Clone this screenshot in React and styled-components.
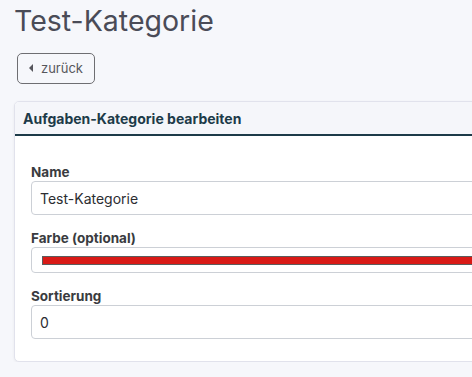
import React from 'react';
import styled, { createGlobalStyle } from 'styled-components';

const Global = createGlobalStyle`
    html, body {
        margin: 0;
        background: #f6f7fb;
        overflow: hidden;
    }
    body {
        font-family: Inter, "Noto Sans", sans-serif;
    }
`;

const Page = styled.div`
    width: 600px;
    padding: 4px 0 0 14px;
`;

const Title = styled.h1`
    margin: 0;
    font-size: 28.5px;
    font-weight: 400;
    line-height: 34px;
    color: #4a4b57;
`;

const BackButton = styled.button`
    margin: 15px 0 0 3px;
    height: 31px;
    width: 78px;
    display: flex;
    align-items: center;
    justify-content: center;
    gap: 8px;
    background: transparent;
    border: 1px solid #6e6e72;
    border-radius: 5px;
    font-family: inherit;
    font-size: 13px;
    color: #56565c;
    padding: 0 0 1px;
`;

const Arrow = styled.span`
    width: 0;
    height: 0;
    border-top: 4px solid transparent;
    border-bottom: 4px solid transparent;
    border-right: 4px solid #56565c;
`;

const Card = styled.div`
    margin-top: 17px;
    background: #fff;
    border: 1px solid #e1e2ec;
    border-radius: 5px;
    box-shadow: 0 1px 3px rgba(0, 0, 0, 0.06);
    overflow: hidden;
`;

const CardHeader = styled.div`
    height: 32px;
    background: #f5f6fa;
    border-bottom: 2px solid #1d3b49;
    display: flex;
    align-items: center;
    padding-left: 8px;
    font-size: 14px;
    font-weight: 700;
    color: #1d3b49;
`;

const CardBody = styled.div`
    padding: 27px 16px 22px;
    display: flex;
    flex-direction: column;
`;

const Label = styled.label`
    font-size: 13.5px;
    font-weight: 700;
    color: #393b40;
    line-height: 18px;
    margin-top: ${p => p.$first ? '0' : '14px'};
`;

const Input = styled.div`
    box-sizing: border-box;
    height: ${p => p.$small ? '26px' : '34px'};
    border: 1px solid #ccd0d6;
    border-radius: 4px;
    display: flex;
    align-items: center;
    padding: 0 ${p => p.$small ? '10px' : '8px'};
    font-size: 14px;
    color: #2c2d31;
`;

const Swatch = styled.div`
    flex: 1;
    height: 7px;
    background: #d91a16;
    border: 1px solid #5c5c5c;
`;

export default function App() {
    return (
        <Page>
            <Global />
            <Title>Test-Kategorie</Title>
            <BackButton><Arrow />zurück</BackButton>
            <Card>
                <CardHeader>Aufgaben-Kategorie bearbeiten</CardHeader>
                <CardBody>
                    <Label $first>Name</Label>
                    <Input>Test-Kategorie</Input>
                    <Label>Farbe (optional)</Label>
                    <Input $small><Swatch /></Input>
                    <Label>Sortierung</Label>
                    <Input>0</Input>
                </CardBody>
            </Card>
        </Page>
    );
}
